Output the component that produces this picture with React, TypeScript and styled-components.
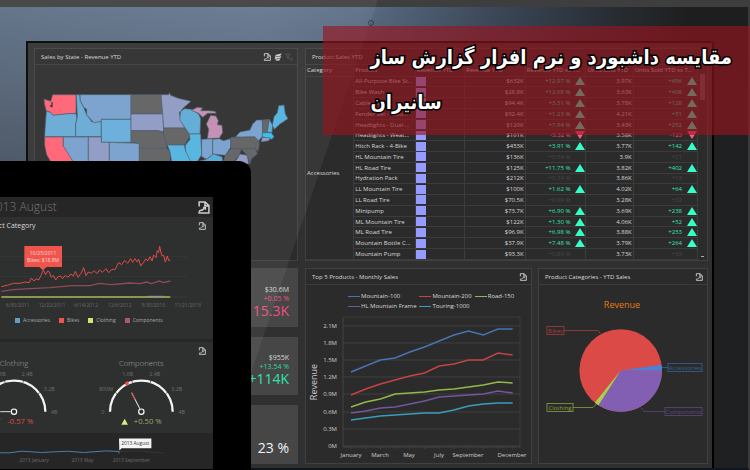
import React from "react";
import styled, { createGlobalStyle } from "styled-components";

const GlobalStyle = createGlobalStyle`
  * { box-sizing: border-box; }
  body { margin: 0; background: #202020; font-family: "Open Sans", "Noto Sans", sans-serif; color: #d8d8d8; }
  h1, h2, h3, p, ul { margin: 0; padding: 0; font-weight: 400; }
  svg { display: block; }
`;

const Page = styled.main`
  position: relative;
  display: flex;
  flex-direction: column;
  height: 100vh;
  min-height: 470px;
  overflow: hidden;
  background: #202020;
`;
const TopBar = styled.div`
  flex: none;
  height: 7px;
  background: #3e3e3e;
`;
const Scene = styled.section`
  flex: 1;
  min-height: 0;
  display: flex;
  padding: 34px 34px 0 26px;
  border-right: 2px solid #3b3b3b;
  border-bottom: 2px solid #10161e;
  background:
    linear-gradient(180deg, transparent 0, rgba(32, 34, 40, 0.4) 160px),
    linear-gradient(90deg, #5c6e84 0, #63768e 35%, #5a6d85 48%, #3c4858 66%, #2a3038 80%, #1e1e1e 92%);
`;
const Glare = styled.div`
  position: absolute;
  inset: 0;
  pointer-events: none;
  background: rgba(255, 255, 255, 0.06);
  clip-path: polygon(0 0, 378px 0, 218px 100%, 0 100%);
`;
const Webcam = styled.div`
  position: absolute;
  top: 20px;
  left: 49%;
  width: 6px;
  height: 6px;
  border: 1px solid #333d4a;
  border-radius: 50%;
  background: #55647a;
`;
const Monitor = styled.div`
  flex: 1;
  min-width: 0;
  display: grid;
  grid-template-columns: 264fr 403fr;
  grid-template-rows: 213fr 196fr;
  gap: 7px;
  padding: 5px 4px 4px 6px;
  border: 2px solid #000;
  border-bottom: 0;
  background: #303030;
`;
const Panel = styled.section`
  min-width: 0;
  min-height: 0;
  display: flex;
  flex-direction: column;
  border: 1px solid #404040;
  background: #2b2b2b;
`;
const PanelHead = styled.header`
  flex: none;
  display: flex;
  align-items: center;
  justify-content: space-between;
  height: 16px;
  padding: 0 4px 0 6px;
  border-bottom: 1px solid #3c3c3c;
`;
const PanelTitle = styled.h2`
  font-size: 6px;
  line-height: 8px;
  white-space: nowrap;
`;
const Tools = styled.div`
  display: flex;
  gap: 3px;
`;
const IconButton = styled.button<{ $dim?: boolean }>`
  display: block;
  padding: 0;
  border: 0;
  background: none;
  color: ${(p) => (p.$dim ? "#4c4c4c" : "#cccccc")};
`;
const Charts = styled.div`
  display: grid;
  grid-template-columns: 227fr 170fr;
  gap: 6px;
  min-width: 0;
  min-height: 0;
`;
const Drawing = styled.svg`
  flex: 1;
  min-height: 0;
  width: 100%;
`;
const MapDrawing = styled.svg`
  width: 100%;
  margin-top: 15px;
`;

const TableArea = styled.div`
  flex: 1;
  min-height: 0;
  display: flex;
`;
const TableBox = styled.div`
  flex: 1;
  min-width: 0;
`;
const Table = styled.table`
  width: 100%;
  height: 100%;
  table-layout: fixed;
  border-collapse: collapse;
  font-size: 6px;
  line-height: 8px;
`;
const Col = styled.col<{ $w: number }>`
  width: ${(p) => p.$w}%;
`;
const Th = styled.th`
  height: 11px;
  padding: 0 1px;
  border-right: 1px solid #3a3a3a;
  border-bottom: 1px solid #3a3a3a;
  font-weight: 400;
  text-align: left;
  white-space: nowrap;
`;
const Td = styled.td<{ $right?: boolean }>`
  padding: 0 1px;
  border-right: 1px solid #3c3c3c;
  border-bottom: 1px solid #3c3c3c;
  text-align: ${(p) => (p.$right ? "right" : "left")};
  white-space: nowrap;
`;
const CategoryTd = styled(Td)`
  padding-top: 10px;
`;
const BarTd = styled(Td)`
  padding: 0;
`;
const ChangeTd = styled(Td)`
  padding: 0;
`;
const Bar = styled.div`
  width: 10px;
  height: 9px;
  background: #969bff;
`;
const Delta = styled.div<{ $tone: string }>`
  display: flex;
  align-items: center;
  justify-content: flex-end;
  gap: 5px;
  color: ${(p) => (p.$tone === "up" ? "#33e6ac" : p.$tone === "down" ? "#ff4d7c" : "#484848")};
`;
const Mark = styled.svg`
  width: 10px;
  height: 8px;
`;
const ScrollTrack = styled.div`
  flex: none;
  display: flex;
  flex-direction: column;
  align-items: center;
  justify-content: space-between;
  width: 9px;
  padding: 9px 0 3px;
`;
const Thumb = styled.div`
  width: 5px;
  height: 26px;
  background: #5a5a5a;
`;
const ScrollDot = styled.div`
  width: 3px;
  height: 1px;
  background: #aaa;
`;

const Kpis = styled.div`
  display: grid;
  grid-template-rows: repeat(3, 1fr);
  gap: 10px;
  min-height: 0;
`;
const Kpi = styled.article`
  display: flex;
  flex-direction: column;
  align-items: flex-end;
  justify-content: flex-end;
  padding: 0 9px 8px;
  background: #464646;
`;
const KpiTotal = styled.p`
  font-size: 7px;
  line-height: 9px;
`;
const KpiDelta = styled.p<{ $color: string }>`
  font-size: 7px;
  line-height: 9px;
  color: ${(p) => p.$color};
`;
const KpiValue = styled.p<{ $color: string }>`
  font-size: 14px;
  line-height: 16px;
  color: ${(p) => p.$color};
`;

const Legend = styled.ul`
  flex: none;
  display: grid;
  grid-template-columns: 71fr 55fr 56fr;
  row-gap: 2px;
  padding: 7px 0 0 42px;
  list-style: none;
`;
const LegendItem = styled.li<{ $color: string }>`
  display: flex;
  align-items: center;
  gap: 1px;
  font-size: 6px;
  line-height: 8px;
  white-space: nowrap;
  &::before { content: ""; width: 12px; height: 1px; background: ${(p) => p.$color}; }
`;

const Tablet = styled.aside`
  position: absolute;
  left: -40px;
  bottom: 0;
  width: 291px;
  height: 309px;
  padding: 36px 38px 1px 0;
  border-radius: 0 12px 0 0;
  background: #000;
`;
const Screen = styled.div`
  display: flex;
  flex-direction: column;
  height: 100%;
  background: #262626;
`;
const ScreenHead = styled.header`
  flex: none;
  display: flex;
  align-items: center;
  justify-content: space-between;
  height: 20px;
  padding: 0 3px 0 29px;
`;
const ScreenTitle = styled.h2`
  font-size: 12px;
  line-height: 18px;
  font-weight: 300;
  color: #767676;
`;
const Card = styled.section`
  flex: none;
  display: flex;
  flex-direction: column;
  margin-bottom: 3px;
  background: #2e2f2f;
`;
const CardHead = styled.header`
  display: flex;
  align-items: center;
  justify-content: space-between;
  height: 17px;
  padding: 0 7px 0 19px;
`;
const CardTitle = styled.h3`
  font-size: 7px;
  line-height: 9px;
`;
const WideDrawing = styled.svg`
  width: 100%;
`;
const SeriesLegend = styled.ul`
  display: flex;
  gap: 9px;
  padding: 4px 0 15px 55px;
  list-style: none;
`;
const SeriesItem = styled.li<{ $color: string }>`
  display: flex;
  align-items: center;
  gap: 3px;
  font-size: 5px;
  line-height: 8px;
  color: #aaa;
  &::before { content: ""; width: 5px; height: 5px; background: ${(p) => p.$color}; }
`;

const Banner = styled.div`
  position: absolute;
  top: 26px;
  right: 0;
  width: 57%;
  min-height: 109px;
  padding: 9px 17px 9px 48px;
  background: rgba(152, 21, 32, 0.64);
`;
const BannerTitle = styled.h1`
  direction: rtl;
  text-align: left;
  white-space: nowrap;
  font-family: "DejaVu Sans Condensed", "DejaVu Sans", sans-serif;
  font-size: 20px;
  line-height: 45px;
  font-weight: 700;
  color: #fff;
  -webkit-text-stroke: 3px #000;
  paint-order: stroke fill;
`;

function ExportIcon({ size = 8 }: { size?: number }) {
  return (
    <svg width={size} height={size} viewBox="0 0 12 12" fill="none" stroke="currentColor" strokeWidth="1.4">
      <path d="M2 5V1h5.5L11 4.2V11H2V9.5M7.3 1v3.5H11" />
      <path d="M1.8 9.2C4.6 9 6 8 7.6 6M5.6 5.8h2.2V8" strokeWidth="1.2" />
    </svg>
  );
}
function LayersIcon() {
  return (
    <svg width="8" height="8" viewBox="0 0 12 12" fill="currentColor">
      <path d="M3 2.6 11.5.8 9.6 4 1 5.6zM1.4 6.4l8.6-1.6L11 6 8.8 8 1 9zM2 9.8l7.6-1L8 11.2 3 11.8z" />
    </svg>
  );
}
function ClearFilterIcon() {
  return (
    <svg width="8" height="8" viewBox="0 0 12 12" fill="none" stroke="currentColor" strokeWidth="1.4">
      <path d="M1 1.5h7L5.3 5v4L3.8 7.5V5zM7.5 7.5l4 4M11.500 7.500l-4 4" />
    </svg>
  );
}

const states: [string, string][] = [
  ["#ff6072", "24 57 44 64 50 44 120 44 120 100 97 101 51 106 44 97 31 93 26 74"],
  ["#64a8d4", "31 94 44 97 51 106 97 101 120 101 123 113 119 132 119 170 26 170 27 150"],
  ["#64a8d4", "121 44 131 44 133 62 143 82 151 102 168 126 196 124 196 170 119 170 119 132 124 112"],
  ["#759fcb", "132 44 285 44 285 118 196 118 196 124 174 128 164 118 152 105 152 88 143 82 133 62"],
  ["#64acd9", "196 118 285 118 285 187 196 187"],
  ["#5e5e5e", "285 44 375 44 381 102 285 102"],
  ["#8c98c3", "285 102 381 102 383 156 367 152 285 152"],
  ["#8c98c3", "375 44 398 44 400 38 404 46 427 55 465 64 444 82 430 98 434 120 447 144 383 144 380 100"],
  ["#ff6072", "26 171 82 171 82 198 108 232 110 252 48 252 32 224 26 196"],
  ["#759fcb", "82 171 157 171 157 252 116 252 82 198"],
  ["#8c98c3", "157 171 196 171 196 187 220 187 220 252 157 252"],
  ["#759fcb", "220 187 310 190 310 252 220 252"],
  ["#5e5e5e", "285 152 367 152 383 158 393 205 310 205 310 190 285 187"],
  ["#5e5e5e", "310 205 393 205 402 216 402 252 310 252"],
  ["#5e5e5e", "383 144 447 144 463 164 454 182 445 195 392 195 383 162"],
  ["#4fb2df", "394 195 445 195 449 214 464 232 466 252 408 252 402 216"],
  ["#5ba9d5", "434 94 446 86 466 88 488 102 494 116 492 162 460 162 447 143 431 120"],
  ["#4fb2df", "460 162 494 162 497 224 482 248 466 248 449 214 448 196 462 178"],
  ["#c28bb0", "466 91 484 82 500 84 494 92 518 92 537 94 541 100 515 100 500 112 488 100"],
  ["#c28bb0", "514 176 518 148 511 132 524 106 540 108 547 122 544 134 558 136 560 158 550 174"],
  ["#759fcb", "497 178 530 176 530 224 512 238 497 230"],
  ["#759fcb", "530 178 550 176 562 182 584 176 584 202 568 226 548 224 530 222"],
  ["#4fa9d6", "486 244 512 238 532 222 558 230 562 252 480 252"],
  ["#5e5e5e", "585 172 660 171 670 184 658 206 585 206"],
  ["#5e5e5e", "585 206 616 208 608 228 585 252 560 252 568 226"],
  ["#8c98c3", "612 222 634 226 638 252 590 252 604 236"],
  ["#5e5e5e", "616 208 658 206 664 222 646 236 642 252 634 226"],
  ["#759fcb", "599 170 612 156 642 150 650 132 662 120 679 120 680 168 668 182 656 170 610 171"],
  ["#5e5e5e", "679 120 699 118 694 158 680 158"],
  ["#5ba9d5", "694 156 700 118 710 136 708 158"],
  ["#4fb2df", "709 136 714 110 724 98 728 77 744 75 748 102 756 116 732 132 715 148"],
  ["#28bff0", "679 158 706 158 714 170 708 178 679 170"],
  ["#8c98c3", "679 172 704 174 698 182 675 186"],
  ["#5e5e5e", "660 184 670 190 666 214 658 206"],
];

type Tone = "up" | "down" | "none";
const rows: [string, string, string, string, string, Tone][] = [
  ["All-Purpose Bike St...", "$632K", "+12.97 %", "3.97K", "+456", "up"],
  ["Bike Wash", "$28.8K", "+12.68 %", "3.63K", "+408", "up"],
  ["Cable Lock", "$94.4K", "+3.51 %", "3.78K", "+128", "up"],
  ["Fender Set - Mou...", "$92.4K", "+1.23 %", "4.21K", "+51", "up"],
  ["Headlights - Dual-...", "$120K", "+7.94 %", "3.43K", "+252", "up"],
  ["Headlights - Weat...", "$161K", "-3.32 %", "3.58K", "-123", "down"],
  ["Hitch Rack - 4-Bike", "$453K", "+3.91 %", "3.77K", "+142", "up"],
  ["HL Mountain Tire", "$136K", "+0.54 %", "3.9K", "+21", "none"],
  ["HL Road Tire", "$125K", "+11.75 %", "3.82K", "+402", "up"],
  ["Hydration Pack", "$212K", "+0.34 %", "3.86K", "+13", "none"],
  ["LL Mountain Tire", "$100K", "+1.62 %", "4.02K", "+64", "up"],
  ["LL Road Tire", "$70.5K", "+0.99 %", "3.28K", "+32", "none"],
  ["Minipump", "$73.7K", "+6.90 %", "3.69K", "+238", "up"],
  ["ML Mountain Tire", "$122K", "+1.30 %", "4.06K", "+52", "up"],
  ["ML Road Tire", "$96.9K", "+6.98 %", "3.88K", "+253", "up"],
  ["Mountain Bottle C...", "$37.9K", "+7.48 %", "3.79K", "+264", "up"],
  ["Mountain Pump", "$93.3K", "+0.89 %", "3.73K", "+33", "none"],
];

function Change({ value, tone }: { value: string; tone: Tone }) {
  return (
    <Delta $tone={tone}>
      {value}
      <Mark viewBox="0 0 10 8" fill={tone === "up" ? "#35ffc6" : "#ff5c8a"}>
        {tone === "up" && <path d="M5 0 10 8H0z" />}
        {tone === "down" && <path d="M0 0h10L5 8z" />}
      </Mark>
    </Delta>
  );
}

function SalesTable() {
  return (
    <TableArea>
      <TableBox>
        <Table>
          <colgroup>
            {[12.2, 15.7, 12.6, 15.5, 15.5, 12.1, 16.4].map((w, i) => <Col key={i} $w={w} />)}
          </colgroup>
          <thead>
            <tr>
              <Th>Category</Th><Th>Product</Th><Th>Revenue YTD</Th><Th>Revenue YTD</Th>
              <Th>Revenue YTD vs T...</Th><Th>Units Sold YTD</Th><Th>Units Sold YTD vs T...</Th>
            </tr>
          </thead>
          <tbody>
            {rows.map((r, i) => (
              <tr key={r[0]}>
                {i === 0 && <CategoryTd rowSpan={rows.length}>Accessories</CategoryTd>}
                <Td>{r[0]}</Td>
                <BarTd><Bar /></BarTd>
                <Td $right>{r[1]}</Td>
                <ChangeTd><Change value={r[2]} tone={r[5]} /></ChangeTd>
                <Td $right>{r[3]}</Td>
                <ChangeTd><Change value={r[4]} tone={r[5]} /></ChangeTd>
              </tr>
            ))}
          </tbody>
        </Table>
      </TableBox>
      <ScrollTrack><Thumb /><ScrollDot /></ScrollTrack>
    </TableArea>
  );
}

const products = [
  { name: "Mountain-100", color: "#4674b5", y: [372, 366, 360, 358, 352, 347, 341, 335, 331, 335, 329, 329] },
  { name: "Mountain-200", color: "#c24444", y: [395, 389, 384, 380, 376, 373, 366, 364, 360, 360, 353, 355] },
  { name: "Road-150", color: "#93b94a", y: [407, 402, 399, 394, 393, 392, 390, 389, 387, 385, 382, 383] },
  { name: "HL Mountain Frame", color: "#70589c", y: [413, 411, 408, 407, 404, 401, 397, 396, 395, 394, 391, 393] },
  { name: "Touring-1000", color: "#3c9cbd", y: [420, 418, 416, 415, 414, 413, 413, 410, 406, 404, 403, 403] },
];
const ticks: [string, number][] = [["2.1M", 326], ["1.8M", 343], ["1.5M", 360], ["1.2M", 377], ["0.9M", 394], ["0.6M", 412], ["0.3M", 429], ["0M", 446]];
const months: [string, number][] = [["January", 351], ["March", 380], ["May", 409], ["July", 439], ["September", 468], ["December", 512]];

function LineChart() {
  return (
    <Drawing viewBox="306 311 225 151" fontSize="6" fill="#ccc">
      <g stroke="#454545" fill="none">
        <path d="M343 317H520V447" strokeWidth="0.6" />
        <path d="M343 317V447H520" />
        {ticks.map(([t, y]) => <path key={t} d={`M343 ${y}H520`} strokeWidth="0.8" />)}
        {Array.from({ length: 12 }, (_, i) => <path key={i} d={`M${351 + i * 14.7} 447v2`} strokeWidth="0.8" />)}
      </g>
      {ticks.map(([t, y]) => <text key={t} x="337" y={y + 2} textAnchor="end">{t}</text>)}
      {months.map(([m, x]) => <text key={m} x={x} y="457" textAnchor="middle">{m}</text>)}
      <text transform="translate(317 382) rotate(-90)" fontSize="9" textAnchor="middle">Revenue</text>
      {products.map((p) => (
        <polyline key={p.name} fill="none" stroke={p.color} strokeWidth="1.5"
          points={p.y.map((y, i) => `${351 + i * 14.7},${y}`).join(" ")} />
      ))}
    </Drawing>
  );
}

function Callout(p: { x: number; y: number; w: number; color: string; label: string; line: string }) {
  return (
    <g>
      <path d={p.line} fill="none" stroke={p.color} strokeWidth="0.8" />
      <rect x={p.x} y={p.y} width={p.w} height="8" fill="none" stroke={p.color} strokeWidth="0.8" />
      <text x={p.x + p.w / 2} y={p.y + 6} textAnchor="middle" fill={p.color}>{p.label}</text>
    </g>
  );
}

function PieChart() {
  return (
    <Drawing viewBox="539 285 168 177" fontSize="6">
      <text x="622" y="307" fontSize="9" textAnchor="middle" fill="#e87a10">Revenue</text>
      <circle cx="620.700" cy="370" r="41.300" fill="#dc4a48" />
      <path d="M620.700 370 661.600 364.300A41.300 41.300 0 0 1 662 370z" fill="#4a83d6" />
      <path d="M620.700 370H662A41.300 41.300 0 0 1 598.400 404.800z" fill="#835fb3" />
      <path d="M620.700 370 598.400 404.800A41.300 41.300 0 0 1 594.800 402.200z" fill="#a3d44f" />
      <Callout x={547} y={326} w={17} color="#a83c3c" label="Bikes" line="M564 330H598L601 334" />
      <Callout x={668} y={363} w={34} color="#356293" label="Accessories" line="M662 367H668" />
      <Callout x={547} y={403} w={26} color="#87a03f" label="Clothing" line="M573 407H593L597 403" />
      <Callout x={665} y={407} w={37} color="#5b477c" label="Components" line="M641 407 644 411H665" />
    </Drawing>
  );
}

const bikes = "4,380 25,375 40,370 60,370 75,366 88,368 94,354 102,363 108,356 116,360 124,344 130,330 137,344 143,333 148,336 154,352 160,346 167,360 174,350 182,348 188,356 196,346 204,352 212,342 220,348 226,334 234,352 243,340 251,323 258,347 265,336 274,340 282,332 291,341 298,330 307,337 318,326 326,338 336,328 345,329 356,308 365,314 374,301 383,310 392,296 398,307 405,296 412,306 416,298 422,318 430,308 437,297 444,302 450,290 456,303 461,285 468,293 472,272 476,277 479,259 485,286 491,286 496,306 502,288 506,302 511,300";
const dates: [string, number][] = [["6/30/2011", 53], ["12/22/2011", 156], ["6/14/2012", 258], ["12/6/2012", 359], ["5/30/2013", 460], ["11/21/2013", 563]];

function CategoryChart() {
  return (
    <WideDrawing viewBox="-120 222 759 234" fontSize="15" fill="#6c6c6c">
      <path d="M-120 290H560M-120 350H560M-120 411H560" stroke="#3d3d3d" strokeWidth="2" />
      <polyline points="4,394 40,389 90,386 150,383 215,377 270,377 298,370 335,374 390,369 420,371 440,366 455,371 478,363 490,368 511,363" fill="none" stroke="#8f4b58" strokeWidth="4" />
      <polyline points={bikes} fill="none" stroke="#df4d49" strokeWidth="3" />
      <path d="M4 411H511" stroke="#aab85c" strokeWidth="5" />
      <path d="M442 409h50" stroke="#9b8fae" strokeWidth="3" />
      <path d="M73 258H186V321H140L129 331 118 321H73z" fill="#ef554d" />
      <g fill="#ffd9d4" textAnchor="middle" fontSize="15">
        <text x="129" y="284">10/25/2011</text>
        <text x="129" y="305">Bikes: $18.8M</text>
      </g>
      {dates.map(([d, x]) => <text key={d} x={x} y="441" textAnchor="middle">{d}</text>)}
    </WideDrawing>
  );
}

function Gauge({ cx, name, delta, up }: { cx: number; name: string; delta: string; up?: boolean }) {
  return (
    <g transform={`translate(${cx} 275)`} textAnchor="middle" fontSize="16" fill="#707070">
      <text y="-138" fontSize="23" fill="#a4a4a4" fontWeight="300">{name}</text>
      <text x="-106" y="-63">800M</text><text x="-41" y="-108">1.6B</text>
      <text x="40" y="-108">2.4B</text><text x="106" y="-63">3.2B</text>
      <text x="-116" y="8">0</text><text x="121" y="8">4B</text>
      <path d="M-94 0A94 93 0 0 1 94 0" fill="none" stroke="#f4f4f4" strokeWidth="7" />
      <path d="m-80-59 8 6M-31-98l5 12M31-98l-5 12M80-59l-8 6" stroke="#2e2f2f" strokeWidth="2" />
      {up && <path d="m-50-87 10-5 3 9-9 6z" fill="#ee5048" />}
      <g transform={up ? "rotate(63)" : undefined} strokeWidth="3">
        <path d="M-10 0H-64" stroke="#ddd" />
        <path d="M-40 0H-64" stroke="#d94c48" />
      </g>
      <circle r="8" fill="#2e2f2f" stroke="#fff" strokeWidth="3.500" />
      {up ? <path d="M-60 39h20l-10-18z" fill="#dfe87e" /> : <path d="M-60 21h20l-10 18z" fill="#ef554d" />}
      <text x="19" y="38" fontSize="23" fill={up ? "#9da36c" : "#d94c48"}>{delta}</text>
    </g>
  );
}

function TabletView() {
  return (
    <Tablet>
      <Screen>
        <ScreenHead>
          <ScreenTitle>2013 August</ScreenTitle>
          <IconButton aria-label="Export dashboard"><ExportIcon size={13} /></IconButton>
        </ScreenHead>
        <Card>
          <CardHead>
            <CardTitle>Product Category</CardTitle>
            <IconButton aria-label="Export chart"><ExportIcon /></IconButton>
          </CardHead>
          <CategoryChart />
          <SeriesLegend>
            <SeriesItem $color="#5f9dcc">Accessories</SeriesItem>
            <SeriesItem $color="#ef554d">Bikes</SeriesItem>
            <SeriesItem $color="#d6e26e">Clothing</SeriesItem>
            <SeriesItem $color="#b0586a">Components</SeriesItem>
          </SeriesLegend>
        </Card>
        <Card>
          <CardHead>
            <CardTitle />
            <IconButton aria-label="Export gauges"><ExportIcon /></IconButton>
          </CardHead>
          <WideDrawing viewBox="-120 117 759 222">
            <Gauge cx={42} name="Clothing" delta="-0.57 %" />
            <Gauge cx={424} name="Components" delta="+0.50 %" up />
          </WideDrawing>
        </Card>
        <WideDrawing viewBox="-120 344 759 102" fontSize="15" fill="#6c6c6c" textAnchor="middle">
          <path d="M-120 395 20 396 60 391 120 395 200 391 250 395 320 390 360 392V398" fill="none" stroke="#4a82a8" strokeWidth="3" />
          <path d="M362 392 420 390 500 397" fill="none" stroke="#3c3c3c" strokeWidth="2" />
          <path d="M360 352H460V382H368L361 389z" fill="#f4f4f4" />
          <text x="410" y="372" fill="#333">2013 August</text>
          <text x="98" y="425">2013 January</text>
          <text x="247" y="425">2013 May</text>
          <text x="398" y="425">2013 September</text>
        </WideDrawing>
      </Screen>
    </Tablet>
  );
}

export default function App() {
  return (
    <>
      <GlobalStyle />
      <Page>
        <TopBar />
        <Scene>
          <Monitor>
            <Panel>
              <PanelHead>
                <PanelTitle>Sales by State - Revenue YTD</PanelTitle>
                <Tools>
                  <IconButton aria-label="Export"><ExportIcon /></IconButton>
                  <IconButton aria-label="Layers"><LayersIcon /></IconButton>
                  <IconButton aria-label="Clear filter" $dim><ClearFilterIcon /></IconButton>
                </Tools>
              </PanelHead>
              <MapDrawing viewBox="-3 0 786 252" stroke="#47596b" strokeWidth="2" strokeLinejoin="round">
                {states.map(([fill, pts], i) => <polygon key={i} fill={fill} points={pts} />)}
                <path d="M48 66v14l-6-3" fill="none" stroke="#303030" strokeWidth="4" />
              </MapDrawing>
            </Panel>
            <Panel>
              <PanelHead><PanelTitle>Product Sales YTD</PanelTitle></PanelHead>
              <SalesTable />
            </Panel>
            <Kpis>
              <Kpi>
                <KpiTotal>$30.6M</KpiTotal>
                <KpiDelta $color="#f0507f">+0.05 %</KpiDelta>
                <KpiValue $color="#f0507f">15.3K</KpiValue>
              </Kpi>
              <Kpi>
                <KpiTotal>$955K</KpiTotal>
                <KpiDelta $color="#2fd9a4">+13.54 %</KpiDelta>
                <KpiValue $color="#2fe3ac">+114K</KpiValue>
              </Kpi>
              <Kpi><KpiValue $color="#f2f2f2">23 %</KpiValue></Kpi>
            </Kpis>
            <Charts>
              <Panel>
                <PanelHead>
                  <PanelTitle>Top 5 Products - Monthly Sales</PanelTitle>
                  <IconButton aria-label="Export"><ExportIcon /></IconButton>
                </PanelHead>
                <Legend>
                  {products.map((p) => <LegendItem key={p.name} $color={p.color}>{p.name}</LegendItem>)}
                </Legend>
                <LineChart />
              </Panel>
              <Panel>
                <PanelHead>
                  <PanelTitle>Product Categories - YTD Sales</PanelTitle>
                  <IconButton aria-label="Export"><ExportIcon /></IconButton>
                </PanelHead>
                <PieChart />
              </Panel>
            </Charts>
          </Monitor>
        </Scene>
        <Webcam />
        <Glare />
        <TabletView />
        <Banner>
          <BannerTitle>مقایسه داشبورد و نرم افزار گزارش ساز<br />سانیران</BannerTitle>
        </Banner>
      </Page>
    </>
  );
}
